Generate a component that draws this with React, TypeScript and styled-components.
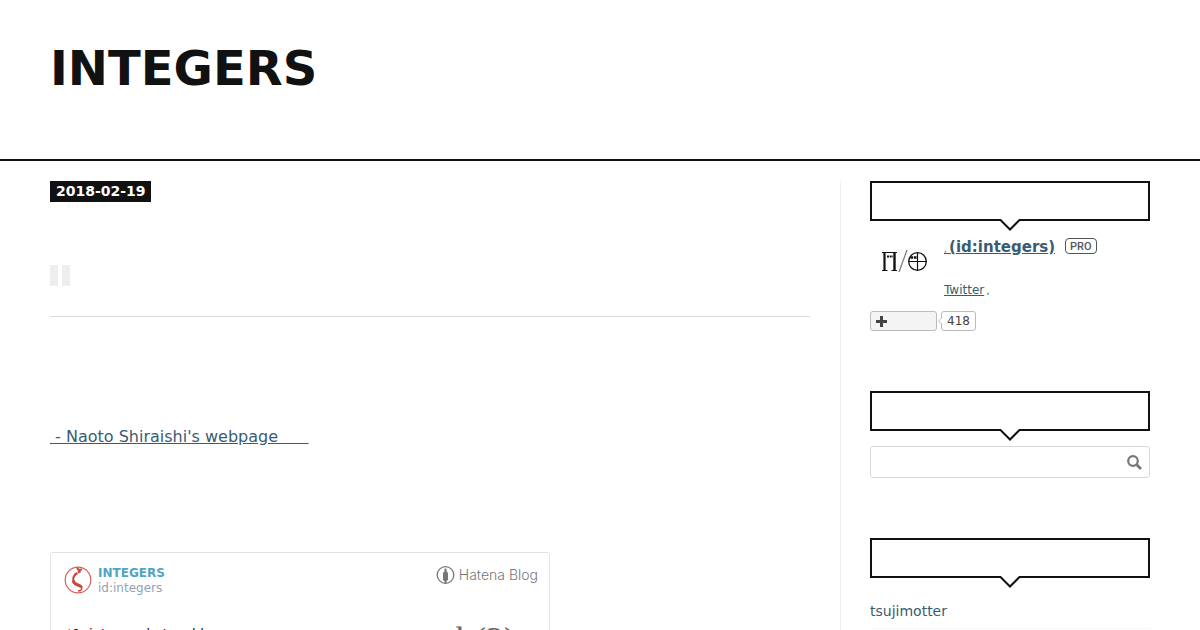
import React from "react";
import styled, { createGlobalStyle } from "styled-components";

const GlobalStyle = createGlobalStyle`
  *, *::before, *::after { box-sizing: border-box; }
  body {
    margin: 0;
    background: #fff;
    color: #111;
    font-family: "DejaVu Sans", sans-serif;
    font-size: 16px;
    line-height: 24px;
  }
  #root { height: 100vh; overflow: hidden; }
  h1, h2, p, ul { margin: 0; padding: 0; }
  a { color: #395c72; }
`;

const Header = styled.header`
  padding: 40px 50px 63px;
  border-bottom: 2px solid #111;
`;

const BlogTitle = styled.h1`
  font-size: 48px;
  line-height: 56px;
  a { color: #111; text-decoration: none; }
`;

const Columns = styled.div`
  display: flex;
  align-items: flex-start;
  padding: 20px 50px 0;
`;

const Main = styled.main`
  flex: 1;
  min-width: 0;
  padding-right: 30px;
`;

const DateLink = styled.a`
  display: block;
  width: fit-content;
  padding: 0 5px 0 6px;
  background: #111;
  font-size: 14px;
  font-weight: bold;
  line-height: 21px;
  text-decoration: none;
  && { color: #fff; }
`;

const EntryHeader = styled.div`
  height: 115px;
  padding-top: 63px;
  border-bottom: 1px solid #d8dcdd;
`;

const QuoteMark = styled.div`
  width: 20px;
  height: 21px;
  border: solid #eee;
  border-width: 0 8px;
`;

const WebLink = styled.a`
  display: block;
  width: fit-content;
  margin: 108px 0 103px;
  white-space: pre;
`;

const Card = styled.article`
  max-width: 500px;
  height: 190px;
  padding: 13px 11px 12px 13px;
  border: 1px solid #e3e3e3;
  border-radius: 3px;
`;

const CardHead = styled.div`
  display: flex;
  align-items: flex-start;
  font-size: 12px;
  line-height: 15px;
`;

const CardNames = styled.div`
  flex: 1;
  padding-left: 6px;
  a { display: block; text-decoration: none; color: #94a3b3; }
  a:first-child { color: #50a5c0; font-weight: bold; }
`;

const HatenaLogo = styled.a`
  display: flex;
  align-items: center;
  gap: 4px;
  font-family: Inter, sans-serif;
  font-size: 14px;
  font-weight: 300;
  line-height: 18px;
  text-decoration: none;
  && { color: #777; }
`;

const CardBody = styled.div`
  display: flex;
  justify-content: space-between;
  padding: 26px 22px 0 2px;
  font-size: 13px;
  line-height: 24px;
`;

const Formula = styled.div`
  font-family: "Liberation Serif", serif;
  font-size: 36px;
  line-height: 36px;
  color: #666;
`;

const Sidebar = styled.aside`
  flex: none;
  width: 310px;
  min-height: 600px;
  padding-left: 29px;
  border-left: 1px solid #eee;
`;

const Module = styled.section`
  margin-bottom: 60px;
`;

const ModuleTitle = styled.h2`
  position: relative;
  height: 40px;
  border: 2px solid #111;
`;

const Pointer = styled.svg`
  position: absolute;
  top: 36px;
  left: calc(50% - 11px);
`;

const Profile = styled.div`
  display: flex;
  gap: 6px;
  padding-top: 14px;
`;

const ProfileText = styled.div`
  font-size: 12px;
  line-height: 18px;
  small { font-size: 8px; font-weight: normal; }
`;

const ProfileName = styled.div`
  display: flex;
  align-items: center;
  gap: 10px;
  height: 22px;
  margin-bottom: 24px;
  a { padding-top: 4px; font-size: 15px; font-weight: bold; }
`;

const Pro = styled.span`
  height: 16px;
  padding: 0 4px;
  border: 1px solid #555;
  border-radius: 4px;
  font-family: Roboto, sans-serif;
  font-size: 11px;
  font-weight: 500;
  line-height: 15px;
  color: #555;
`;

const Follow = styled.div`
  display: flex;
  gap: 4px;
  margin-top: 10px;
`;

const FollowButton = styled.button`
  display: flex;
  align-items: center;
  width: 67px;
  height: 20px;
  padding: 0 5px;
  border: 1px solid #bbb;
  border-radius: 3px;
  background: #f4f4f4;
`;

const Count = styled.a`
  position: relative;
  height: 20px;
  padding: 0 5px;
  border: 1px solid #bbb;
  border-radius: 3px;
  font-size: 12px;
  line-height: 18px;
  text-decoration: none;
  && { color: #444; }
  svg { position: absolute; left: -4px; top: 5px; }
`;

const SearchForm = styled.form`
  display: flex;
  height: 32px;
  margin-top: 15px;
  border: 1px solid #d8d8d8;
  border-radius: 3px;
`;

const SearchInput = styled.input`
  flex: 1;
  min-width: 0;
  padding: 0 8px;
  border: 0;
  outline: 0;
  background: transparent;
`;

const SearchButton = styled.button`
  display: flex;
  align-items: center;
  justify-content: center;
  width: 30px;
  padding: 0;
  border: 0;
  background: transparent;
`;

const Links = styled.ul`
  padding-top: 22px;
  list-style: none;
  font-size: 14px;
  line-height: 22px;
  li { padding-bottom: 6px; border-bottom: 1px solid #f8f8f8; }
  a { text-decoration: none; }
`;

function Heading({ label }: { label: string }) {
  return (
    <ModuleTitle aria-label={label}>
      <Pointer width="22" height="12" viewBox="0 0 22 12" aria-hidden="true">
        <path d="M1.5 0H20.5L11 10.5Z" fill="#fff" />
        <path d="M1 .5L11 10.5L21 .5" fill="none" stroke="#111" strokeWidth="2" />
      </Pointer>
    </ModuleTitle>
  );
}

function ProfileIcon() {
  return (
    <svg width="68" height="60" viewBox="0 0 68 60" aria-hidden="true" fill="none">
      <g stroke="#111" strokeWidth="1">
        <path d="M12 17.5H27M12 35.5H17.500M21.500 35.500H27" />
        <path d="M14.500 18V35" strokeWidth="2.200" />
        <path d="M24.500 18V35" strokeWidth="2.400" />
        <path d="M17 21.500H23" strokeWidth="2" strokeDasharray="2 .7" />
        <path d="M37 15L29 37" stroke="#777" strokeWidth="1.200" />
        <circle cx="47.500" cy="26.500" r="8.800" strokeWidth="1.300" />
        <path d="M38.500 26.500H56.500M47.500 18V35" strokeWidth="1.200" />
        <path d="M40.500 22.500H47" strokeWidth="2.500" strokeDasharray="2.600 .8" />
      </g>
    </svg>
  );
}

function ZetaIcon() {
  return (
    <svg width="28" height="28" viewBox="0 0 28 28" fill="none" aria-hidden="true">
      <circle cx="14" cy="14" r="12.800" stroke="#d8615b" strokeWidth="1.200" />
      <path d="M13 1.500L14.500 4L18 3.500" stroke="#c94741" strokeWidth="2" />
      <path d="M16.500 5L10.500 9" stroke="#c94741" strokeWidth="2.200" strokeDasharray="3 .6" />
      <path d="M11.500 8C9 11 8.500 14 10 17" stroke="#c94741" strokeWidth="2" />
      <path d="M9.300 14.500C10 20 16.500 18 17.500 21.500" stroke="#c94741" strokeWidth="3" />
      <path d="M17.500 21C18.500 24 16 25.500 14 24.500" stroke="#c94741" strokeWidth="1.600" />
    </svg>
  );
}

export default function App() {
  return (
    <>
      <GlobalStyle />
      <Header>
        <BlogTitle><a href="#top">INTEGERS</a></BlogTitle>
      </Header>
      <Columns>
        <Main>
          <DateLink href="#date">2018-02-19</DateLink>
          <EntryHeader><QuoteMark /></EntryHeader>
          <WebLink href="#webpage">{" - Naoto Shiraishi's webpage\u00a0\u00a0\u00a0 \u00a0 "}</WebLink>
          <Card>
            <CardHead>
              <ZetaIcon />
              <CardNames>
                <a href="#blog">INTEGERS</a>
                <a href="#author">id:integers</a>
              </CardNames>
              <HatenaLogo href="#hatena">
                <svg width="19" height="18" viewBox="0 1 19 18" aria-hidden="true">
                  <circle cx="9.500" cy="10" r="8.300" fill="none" stroke="#777" strokeWidth="1.300" />
                  <path d="M8.500 3.500H10.500V6L12 8V15L10.500 16V18H8.500V16L7 15V8L8.500 6Z" fill="#777" />
                </svg>
                Hatena Blog
              </HatenaLogo>
            </CardHead>
            <CardBody>
              <p>*1, integers.hatenablog.com</p>
              <Formula>b(2)</Formula>
            </CardBody>
          </Card>
        </Main>
        <Sidebar>
          <Module>
            <Heading label="Profile" />
            <Profile>
              <ProfileIcon />
              <ProfileText>
                <ProfileName>
                  <a href="#profile"><small>, </small>(id:integers)</a>
                  <Pro>PRO</Pro>
                </ProfileName>
                <p><a href="#twitter">Twitter</a><small> ,</small></p>
              </ProfileText>
            </Profile>
            <Follow>
              <FollowButton aria-label="Follow">
                <svg width="11" height="11" viewBox="0 0 11 11" aria-hidden="true">
                  <path d="M5.500 0V11M0 5.500H11" stroke="#444" strokeWidth="3" />
                </svg>
              </FollowButton>
              <Count href="#followers">
                <svg width="5" height="8" viewBox="0 0 5 8" aria-hidden="true">
                  <path d="M4.500 0L.7 4L4.500 8" fill="#fff" stroke="#bbb" />
                </svg>
                418
              </Count>
            </Follow>
          </Module>
          <Module>
            <Heading label="Search" />
            <SearchForm>
              <SearchInput type="text" aria-label="Search" />
              <SearchButton type="button" aria-label="Search">
                <svg width="15" height="15" viewBox="0 0 15 15" fill="none" stroke="#777" aria-hidden="true">
                  <circle cx="6" cy="6" r="4.800" strokeWidth="2.200" />
                  <path d="M9.500 9.500L14 14" strokeWidth="2.800" />
                </svg>
              </SearchButton>
            </SearchForm>
          </Module>
          <Module>
            <Heading label="Links" />
            <Links>
              <li><a href="#tsujimotter">tsujimotter</a></li>
            </Links>
          </Module>
        </Sidebar>
      </Columns>
    </>
  );
}
